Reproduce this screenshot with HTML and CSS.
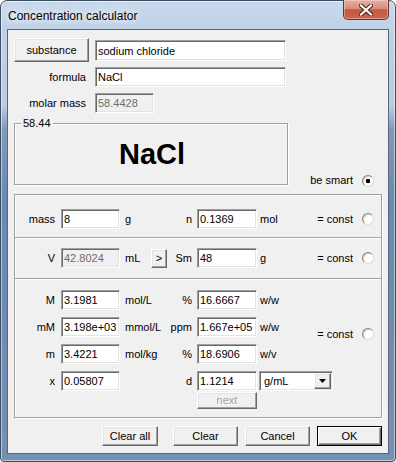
FILE: index.html
```html
<!DOCTYPE html>
<html>
<head>
<meta charset="utf-8">
<link rel="stylesheet" href="styles.css">
</head>
<body>
<div class="window">
  <div class="titlebar">
    <span class="title">Concentration calculator</span>
    <div class="close">
      <svg width="14" height="12" viewBox="0 0 14 12">
        <path d="M2 1.5 L12 10.5 M12 1.5 L2 10.5" stroke="#4a2018" stroke-width="4.2" stroke-linecap="square"/>
        <path d="M2 1.5 L12 10.5 M12 1.5 L2 10.5" stroke="#ffffff" stroke-width="2.2" stroke-linecap="square"/>
      </svg>
    </div>
  </div>
  <div class="client">
    <div class="top-grid">
      <button class="btn btn-substance">substance</button>
      <input class="field field-top" value="sodium chloride" readonly>
      <span class="top-lbl">formula</span>
      <input class="field" value="NaCl" readonly>
      <span class="top-lbl">molar mass</span>
      <input class="field field-short dis" value="58.4428" readonly>
    </div>

    <div class="formula-row">
      <div class="groupbox">
        <span class="legend">58.44</span>
        <span class="big">NaCl</span>
      </div>
      <div class="smart"><span>be smart</span><span class="radio checked"></span></div>
    </div>

    <div class="calc">
      <div class="sec s1">
        <span class="c-lbl">mass</span>
        <input class="field" value="8" readonly>
        <span class="unit">g</span>
        <span class="c-lbl2">n</span>
        <input class="field" value="0.1369" readonly>
        <span class="unit2">mol</span>
        <div class="const"><span>= const</span><span class="radio"></span></div>
      </div>
      <div class="sec s2">
        <span class="c-lbl">V</span>
        <input class="field dis" value="42.8024" readonly>
        <span class="unit unit-btn"><span class="unit-txt">mL</span><button class="btn btn-arrow">&gt;</button></span>
        <span class="c-lbl2">Sm</span>
        <input class="field" value="48" readonly>
        <span class="unit2">g</span>
        <div class="const"><span>= const</span><span class="radio"></span></div>
      </div>
      <div class="sec s3">
        <span class="c-lbl r1">M</span>
        <input class="field r1" value="3.1981" readonly>
        <span class="unit r1">mol/L</span>
        <span class="c-lbl2 r1">%</span>
        <input class="field r1" value="16.6667" readonly>
        <span class="unit2 r1">w/w</span>

        <span class="c-lbl r2">mM</span>
        <input class="field r2" value="3.198e+03" readonly>
        <span class="unit r2">mmol/L</span>
        <span class="c-lbl2 r2">ppm</span>
        <input class="field r2" value="1.667e+05" readonly>
        <span class="unit2 r2">w/w</span>

        <span class="c-lbl r3">m</span>
        <input class="field r3" value="3.4221" readonly>
        <span class="unit r3">mol/kg</span>
        <span class="c-lbl2 r3">%</span>
        <input class="field r3" value="18.6906" readonly>
        <span class="unit2 r3">w/v</span>

        <span class="c-lbl r4">x</span>
        <input class="field r4" value="0.05807" readonly>
        <span class="c-lbl2 r4 c4">d</span>
        <input class="field r4 c5" value="1.1214" readonly>
        <div class="combo r4">
          <span class="combo-txt">g/mL</span>
          <span class="combo-drop">
            <svg width="7" height="4" viewBox="0 0 7 4"><path d="M0 0 H7 L3.5 4 Z" fill="#000"/></svg>
          </span>
        </div>

        <button class="btn btn-next" disabled>next</button>

        <div class="const const3"><span>= const</span><span class="radio"></span></div>
      </div>
    </div>

    <div class="actions">
      <button class="btn btn-act btn-clearall">Clear all</button>
      <button class="btn btn-act">Clear</button>
      <button class="btn btn-act">Cancel</button>
      <button class="btn btn-act btn-default">OK</button>
    </div>
  </div>
</div>
</body>
</html>
```

FILE: styles.css
```css
* { box-sizing: border-box; }

body {
  margin: 0;
  background: #ffffff;
  font-family: "Liberation Sans", Arial, sans-serif;
  font-size: 11px;
  color: #000;
}

.window {
  width: 396px;
  height: 462px;
  border: 1px solid #3d4d61;
  border-radius: 7px 7px 4px 4px;
  padding: 0 6px 7px;
  background: linear-gradient(to bottom, #cadaed 0px, #bfd1e7 30px, #b9cce3 105px, #7f9abb 128px, #6b89af 200px, #7490b2 100%);
  box-shadow: inset 0 0 0 1px rgba(255, 255, 255, 0.5);
  display: flex;
  flex-direction: column;
}

.titlebar {
  height: 28px;
  flex: none;
  display: flex;
  justify-content: space-between;
  align-items: flex-start;
}

.title {
  padding: 8px 0 0 1px;
  font-size: 12px;
  line-height: 14px;
  text-shadow: 0 0 6px #ffffff, 0 0 10px #ffffff;
}

.close {
  width: 46px;
  height: 20px;
  margin-top: -1px;
  border: 1px solid #6a3328;
  border-top: none;
  border-radius: 0 0 5px 5px;
  background: linear-gradient(to bottom, #e6b0a3 0%, #d88d7a 45%, #c5573f 52%, #c9654c 100%);
  box-shadow: inset 0 0 0 1px rgba(255, 220, 210, 0.45);
  display: flex;
  align-items: center;
  justify-content: center;
}

.client {
  flex: 1;
  border: 1px solid #56667b;
  background: #f0f0f0;
}

/* top grid */
.top-grid {
  display: grid;
  grid-template-columns: 75px 191px;
  grid-template-rows: 29px 26px 20px;
  column-gap: 6px;
  align-items: start;
  padding: 8px 0 0 6px;
}

.top-lbl {
  text-align: right;
  line-height: 20px;
  padding-right: 3px;
}

.field {
  font: inherit;
  height: 20px;
  width: 100%;
  margin: 0;
  padding: 0 2px;
  border: 1px solid;
  border-color: #a0a0a0 #ffffff #ffffff #a0a0a0;
  box-shadow: inset 1px 1px 0 #696969, inset -1px -1px 0 #e3e3e3;
  background: #ffffff;
  color: #000;
  outline: none;
}

.field-top {
  height: 21px;
  margin-top: 2px;
}

.field-short { width: 59px; }

.field.dis {
  background: #f0f0f0;
  color: #6d6d6d;
}

.btn {
  font: inherit;
  color: #000;
  background: #f0f0f0;
  margin: 0;
  padding: 0;
  border: 1px solid;
  border-color: #ffffff #696969 #696969 #ffffff;
  box-shadow: inset -1px -1px 0 #a0a0a0, inset 1px 1px 0 #e3e3e3;
  line-height: 1;
}

.btn:disabled {
  color: #a0a0a0;
  text-shadow: 1px 1px 0 #ffffff;
}

.btn-substance {
  height: 24px;
  width: 75px;
}

/* formula group */
.formula-row {
  display: flex;
  align-items: flex-end;
  margin-top: 10px;
  padding: 0 14px 0 6px;
}

.groupbox {
  position: relative;
  width: 274px;
  height: 62px;
  border: 1px solid #a0a0a0;
  box-shadow: 1px 1px 0 #ffffff, inset 1px 1px 0 #ffffff;
  display: flex;
  align-items: center;
  justify-content: center;
}

.legend {
  position: absolute;
  top: -7px;
  left: 6px;
  padding: 0 2px;
  background: #f0f0f0;
  line-height: 13px;
}

.big {
  font-size: 29px;
  font-weight: bold;
  line-height: 34px;
  margin-left: 2px;
}

.smart {
  margin-left: auto;
  display: flex;
  align-items: center;
  gap: 9px;
  line-height: 13px;
  margin-bottom: -2px;
}

.radio {
  width: 12px;
  height: 12px;
  border-radius: 50%;
  border: 1px solid;
  border-color: #858585 #dadada #dadada #858585;
  background: #ffffff;
  box-shadow: inset 1px 1px 0 #cfcfcf;
  flex: none;
}

.radio.checked {
  background: radial-gradient(circle at 50% 50%, #000 0, #000 2px, #ffffff 2.6px);
}

/* calculator box */
.calc {
  margin: 9px 6px 0;
  border: 1px solid #a0a0a0;
  box-shadow: 1px 1px 0 #ffffff, inset 1px 1px 0 #ffffff;
}

.sec {
  display: grid;
  grid-template-columns: 46px 59px 50px 27px 60px minmax(0, 1fr) auto;
  grid-template-rows: 20px;
  align-items: start;
}

.s1 { padding: 14px 0 8px; }

.s2, .s3 {
  border-top: 1px solid #a0a0a0;
  box-shadow: inset 0 1px 0 #ffffff;
}

.s2 { padding: 10px 0; }

.s3 {
  padding: 11px 0 8px;
  grid-template-rows: 27px 27px 27px 21px 17px;
}

.c-lbl {
  line-height: 20px;
  text-align: right;
  padding-right: 6px;
  grid-column: 1;
}

.c-lbl2 {
  line-height: 20px;
  text-align: right;
  padding-right: 5px;
  grid-column: 4;
}

.unit {
  line-height: 20px;
  padding-left: 5px;
  grid-column: 3;
  white-space: nowrap;
}

.unit2 {
  line-height: 20px;
  padding-left: 3px;
  grid-column: 6;
}

.unit-btn {
  display: flex;
  align-items: center;
  height: 20px;
}

.unit-txt { width: 26px; }

.btn-arrow {
  width: 16px;
  height: 19px;
}

.r1 { grid-row: 1; }
.r2 { grid-row: 2; }
.r3 { grid-row: 3; }
.r4 { grid-row: 4; }
.c4 { grid-column: 4; }
.c5 { grid-column: 5; }

.const {
  grid-column: 7;
  grid-row: 1;
  display: flex;
  align-items: center;
  gap: 9px;
  height: 20px;
  padding-right: 7px;
}

.const3 {
  grid-row: 1 / 5;
  align-self: center;
  margin-bottom: 14px;
}

.combo {
  grid-column: 6;
  margin-left: 2px;
  width: 74px;
  height: 20px;
  border: 1px solid;
  border-color: #a0a0a0 #ffffff #ffffff #a0a0a0;
  box-shadow: inset 1px 1px 0 #696969, inset -1px -1px 0 #e3e3e3;
  background: #ffffff;
  display: flex;
  align-items: stretch;
  padding: 1px;
}

.combo-txt {
  flex: 1;
  line-height: 16px;
  padding-left: 2px;
  margin-left: 1px;
}

.combo-drop {
  width: 17px;
  background: #f0f0f0;
  border: 1px solid;
  border-color: #ffffff #696969 #696969 #ffffff;
  box-shadow: inset -1px -1px 0 #a0a0a0, inset 1px 1px 0 #e3e3e3;
  display: flex;
  align-items: center;
  justify-content: center;
}

.btn-next {
  grid-row: 5;
  grid-column: 5;
  height: 17px;
}

/* bottom buttons */
.actions {
  display: flex;
  justify-content: flex-end;
  gap: 7px;
  margin-top: 8px;
  padding-right: 6px;
}

.btn-act {
  width: 65px;
  height: 20px;
}

.btn-clearall {
  width: 56px;
  margin-right: 8px;
}

.btn-default {
  border-color: #000000;
  box-shadow: inset 1px 1px 0 #ffffff, inset -1px -1px 0 #696969, inset -2px -2px 0 #a0a0a0;
}
```
